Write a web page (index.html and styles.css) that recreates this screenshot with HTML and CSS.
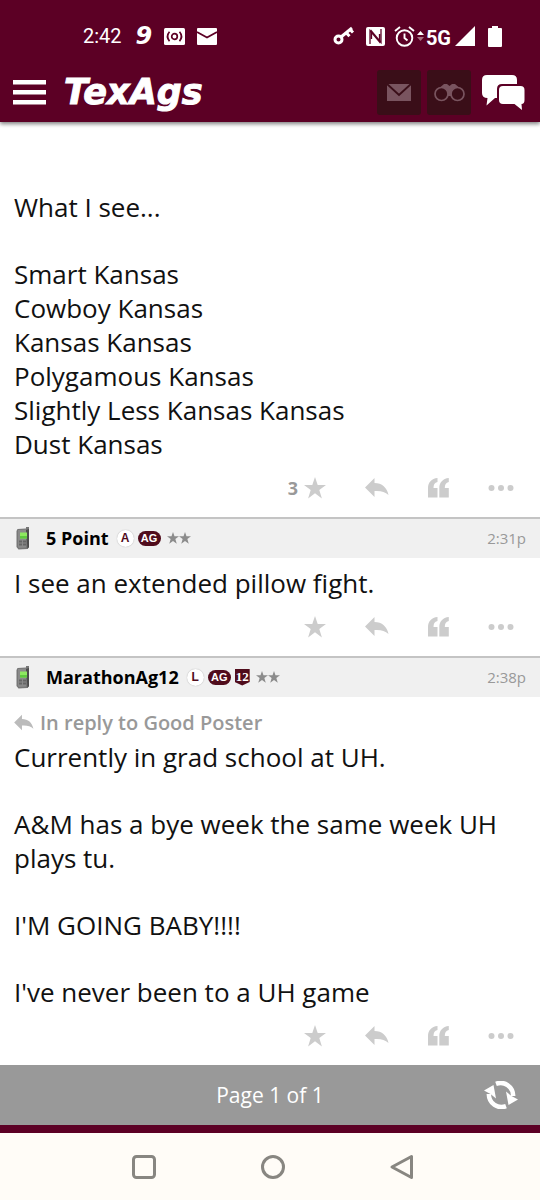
FILE: index.html
```html
<!DOCTYPE html>
<html lang="en">
<head>
<meta charset="utf-8">
<meta name="viewport" content="width=device-width, initial-scale=1">
<title>TexAgs</title>
<link rel="stylesheet" href="styles.css">
</head>
<body>
<svg class="sprite" aria-hidden="true">
  <symbol id="star" viewBox="0 0 22 22"><path d="M11 0l2.700 8H22l-6.700 5 2.600 8.400L11 16.300 4.100 21.400 6.700 13 0 8h8.300z"/></symbol>
  <symbol id="reply" viewBox="0 0 24 22"><path d="M0 10.500L9.500 1v5C17 6 22 10.500 23.500 18c-3.500-3.500-8-4.400-14-4v6z"/></symbol>
  <symbol id="quote" viewBox="0 0 22 20"><path d="M9.500 0v4C6.500 4.500 5.500 6.500 5.500 10h4v9.500H0V10C0 4.500 3.500.5 9.500 0zM20.800 0v4c-3 .5-4 2.500-4 6h4v9.500h-9.500V10c0-5.500 3.500-9.500 9.500-10z"/></symbol>
  <symbol id="dots" viewBox="0 0 26 8"><circle cx="3.500" cy="4" r="3"/><circle cx="13" cy="4" r="3"/><circle cx="22.500" cy="4" r="3"/></symbol>
  <symbol id="phone" viewBox="0 0 14 23"><path d="M1.500 2L10 1.500V0h3v20l-1.500 2-9 .5L.5 20V4z" fill="#777"/><path d="M10 3l3-1v18l-1.500 2z" fill="#4c4c4c"/><path d="M2 3l8-.5v18l-7 .5-1-1z" fill="#8a8a8a"/><path d="M4 5.500h7v6H4z" fill="#8ee860"/><path d="M4 9h7v2.500H4z" fill="#5fc840"/><path d="M3 13.500h3v2H3zm4 0h3v2H7zm-4 3h3v2H3zm4 0h3v2H7z" fill="#666"/></symbol>
</svg>

<header class="top">
  <div class="status">
    <div class="status-group">
      <span>2:42</span>
      <span class="nine">9</span>
      <svg width="21" height="17" viewBox="0 0 21 17"><rect width="21" height="17" rx="1.500" fill="#fff"/><g fill="none" stroke="#5c0025" stroke-width="1.700"><circle cx="10.500" cy="8.500" r="2.800"/><path d="M5.500 3.800q-4 4.700 0 9.400M15.500 3.800q4 4.700 0 9.400"/></g></svg>
      <svg width="20" height="17" viewBox="0 0 20 17"><rect width="20" height="17" rx="1" fill="#fff"/><path d="M0 4l10 5.500L20 4" fill="none" stroke="#5c0025" stroke-width="1.800"/></svg>
    </div>
    <div class="status-group status-right">
      <svg class="key" width="22" height="20" viewBox="0 0 22 20" fill="none" stroke="#fff"><circle cx="5.500" cy="13.500" r="3.500" stroke-width="3"/><path d="M8 11L19 2" stroke-width="3"/><path d="M13 6.500l3.500 3.800M17 3.500l3 3" stroke-width="3"/></svg>
      <svg class="nfc" width="19" height="19" viewBox="0 0 19 19"><rect width="19" height="19" rx="2" fill="#fff"/><path d="M4 17V3.500L13.500 15V7M15 2v13.500L5.500 4v8" fill="none" stroke="#5c0025" stroke-width="1.300"/></svg>
      <svg width="21" height="21" viewBox="0 0 21 21" fill="none" stroke="#fff" stroke-width="1.900"><circle cx="10.500" cy="12" r="7.800"/><path d="M10.500 7.500V12l3 2.500M1 5l5-4M20 5l-5-4"/></svg>
      <svg class="updown" width="7" height="10" viewBox="0 0 7 10"><path d="M0 4l3.500-4L7 4z" fill="#fff"/><path d="M0 6h7l-3.500 4z" fill="#a77082"/></svg>
      <span class="net">5G</span>
      <svg class="signal" width="20" height="20" viewBox="0 0 20 20"><path d="M20 0v20H0z" fill="#fff"/></svg>
      <svg width="14" height="21" viewBox="0 0 14 21"><path d="M4 0h6v2h3q1 0 1 1v17q0 1-1 1H1q-1 0-1-1V3q0-1 1-1h3z" fill="#fff"/></svg>
    </div>
  </div>
  <nav class="bar">
    <button class="menu" aria-label="Menu"><svg width="33" height="25" viewBox="0 0 33 25" fill="#fff"><path d="M0 0h33v4.500H0zM0 10h33v4.500H0zM0 20h33v4.500H0z"/></svg></button>
    <a class="logo" href="#">TexAgs</a>
    <div class="tools">
      <button class="tool" aria-label="Messages"><svg width="24" height="17" viewBox="0 0 24 17"><path d="M0 0h24v17H0z" fill="#79545f"/><path d="M0 0l12 11L24 0" fill="none" stroke="#3a0e18" stroke-width="2"/></svg></button>
      <button class="tool" aria-label="Watched"><svg width="31" height="19" viewBox="0 0 31 19"><path d="M3 7L10 1l3 0 2.500 2L18 1h3l7 6-7 6H10z" fill="#79545f"/><circle cx="7.500" cy="11" r="6.500" fill="#3a0e18" stroke="#79545f" stroke-width="1.700"/><circle cx="23.500" cy="11" r="6.500" fill="#3a0e18" stroke="#79545f" stroke-width="1.700"/></svg></button>
      <button class="chat" aria-label="Forums"><svg width="43" height="35" viewBox="0 0 43 35"><path d="M5 0h25q5 0 5 5v4H20q-5 0-5 5v9h-2l-8.500 7.500L5.500 23Q0 23 0 18V5q0-5 5-5z" fill="#fff"/><path d="M21 11h17.500q4 0 4 4v10q0 4-3 4l.5 6-7.500-6H21q-4 0-4-4V15q0-4 4-4z" fill="#fff"/></svg></button>
    </div>
  </nav>
</header>

<main>
  <article class="post">
    <div class="body first">
      <p>What I see...</p>
      <p>Smart Kansas<br>Cowboy Kansas<br>Kansas Kansas<br>Polygamous Kansas<br>Slightly Less Kansas Kansas<br>Dust Kansas</p>
    </div>
    <div class="actions">
      <button class="like" aria-label="Star, 3"><span class="count">3</span><svg width="22" height="22"><use href="#star"/></svg></button>
      <button aria-label="Reply"><svg width="24" height="22"><use href="#reply"/></svg></button>
      <button aria-label="Quote"><svg width="22" height="20"><use href="#quote"/></svg></button>
      <button aria-label="More"><svg width="26" height="8"><use href="#dots"/></svg></button>
    </div>
  </article>

  <article class="post">
    <header class="meta">
      <svg class="device" width="14" height="23"><use href="#phone"/></svg>
      <a class="user" href="#">5 Point</a>
      <span class="badges">
        <span class="round">A</span><span class="pill">AG</span>
        <span class="stars"><svg width="12" height="12"><use href="#star"/></svg><svg width="12" height="12"><use href="#star"/></svg></span>
      </span>
      <time>2:31p</time>
    </header>
    <div class="body"><p>I see an extended pillow fight.</p></div>
    <div class="actions">
      <button class="like" aria-label="Star"><svg width="22" height="22"><use href="#star"/></svg></button>
      <button aria-label="Reply"><svg width="24" height="22"><use href="#reply"/></svg></button>
      <button aria-label="Quote"><svg width="22" height="20"><use href="#quote"/></svg></button>
      <button aria-label="More"><svg width="26" height="8"><use href="#dots"/></svg></button>
    </div>
  </article>

  <article class="post">
    <header class="meta">
      <svg class="device" width="14" height="23"><use href="#phone"/></svg>
      <a class="user" href="#">MarathonAg12</a>
      <span class="badges">
        <span class="round">L</span><span class="pill">AG</span><span class="shield">12</span>
        <span class="stars"><svg width="12" height="12"><use href="#star"/></svg><svg width="12" height="12"><use href="#star"/></svg></span>
      </span>
      <time>2:38p</time>
    </header>
    <div class="body">
      <a class="in-reply" href="#"><svg width="20" height="18"><use href="#reply"/></svg>In reply to Good Poster</a>
      <p>Currently in grad school at UH.</p>
      <p>A&amp;M has a bye week the same week UH plays tu.</p>
      <p>I'M GOING BABY!!!!</p>
      <p>I've never been to a UH game</p>
    </div>
    <div class="actions">
      <button class="like" aria-label="Star"><svg width="22" height="22"><use href="#star"/></svg></button>
      <button aria-label="Reply"><svg width="24" height="22"><use href="#reply"/></svg></button>
      <button aria-label="Quote"><svg width="22" height="20"><use href="#quote"/></svg></button>
      <button aria-label="More"><svg width="26" height="8"><use href="#dots"/></svg></button>
    </div>
  </article>
</main>

<footer class="pager">
  <span class="page">Page 1 of 1</span>
  <button class="refresh" aria-label="Refresh"><svg width="34" height="28" viewBox="0 0 34 28"><g fill="none" stroke="#fff" stroke-width="4.500"><path d="M12 2.800C20-.2 29 5 29.200 15"/><path d="M22 25.200C14 28.200 5 23 4.800 13"/></g><path d="M0 9.500L9.500 4l2.500 13.500-5.500-4.500zM34 18.500L24.500 24 22 10.500l5.500 4.500z" fill="#fff"/></svg></button>
</footer>
<nav class="system">
  <button aria-label="Recent apps"><svg width="26" height="26" viewBox="0 0 26 26"><rect x="2.500" y="2.500" width="21" height="21" rx="3"/></svg></button>
  <button aria-label="Home"><svg width="26" height="26" viewBox="0 0 26 26"><circle cx="13" cy="13" r="10.500"/></svg></button>
  <button aria-label="Back"><svg width="26" height="26" viewBox="0 0 26 26"><path d="M22.500 2.500v21L3 13z" stroke-linejoin="round"/></svg></button>
</nav>
</body>
</html>
```
FILE: styles.css
```css
* { box-sizing: border-box; }

body {
  margin: 0;
  min-height: 100vh;
  display: flex;
  flex-direction: column;
  background: #fff;
  color: #111;
  font-family: "Open Sans", sans-serif;
}

main { flex: 1 0 auto; }
svg { display: block; flex: none; }
a { color: inherit; text-decoration: none; }
p { margin: 0; }

button {
  display: flex;
  align-items: center;
  justify-content: center;
  border: 0;
  padding: 0;
  background: none;
  color: inherit;
  font: inherit;
  cursor: pointer;
}

.sprite { position: absolute; width: 0; height: 0; }

/* Status bar and site header */
.top {
  background: #5c0025;
  color: #fff;
  box-shadow: 0 2px 4px rgba(0, 0, 0, 0.5);
}

.status {
  display: flex;
  justify-content: space-between;
  align-items: flex-end;
  height: 50px;
  padding: 0 38px 0 83px;
  font-family: Roboto, sans-serif;
  font-size: 20px;
}

.status-group {
  display: flex;
  align-items: center;
  gap: 12px;
  height: 28px;
}

.nine {
  margin-left: 2px;
  font: italic 900 24px/28px "DejaVu Sans", sans-serif;
}

.status-right { gap: 0; }
.key { margin-right: 11px; }
.nfc { margin-right: 9px; }
.updown { margin: 0 2px; }

.net {
  font-size: 20px;
  font-weight: 700;
  line-height: 28px;
  padding-top: 4px;
}

.signal { margin: 0 13px 0 4px; }

.bar {
  display: flex;
  align-items: center;
  height: 72px;
  padding: 12px 15px 0 13px;
}

.logo {
  margin-left: 18px;
  font: italic 700 35px/48px "DejaVu Sans", sans-serif;
  -webkit-text-stroke: 1px #fff;
}

.tools {
  display: flex;
  align-items: center;
  gap: 6px;
  margin-left: auto;
}

.tool {
  width: 44px;
  height: 45px;
  border-radius: 3px;
  background: #3a0e18;
}

.chat { margin-left: 5px; }

/* Posts */
.body {
  padding: 8px 14px 0;
  font-size: 26px;
  line-height: 34px;
}

.body.first { padding-top: 68px; }
.body p + p { margin-top: 33px; }

.meta {
  display: flex;
  align-items: center;
  height: 41px;
  padding: 0 14px 1px 16px;
  border-top: 2px solid #c4c4c4;
  background: #f0f0f0;
}

.user {
  margin-left: 16px;
  color: #000;
  font-size: 18px;
  font-weight: 700;
}

.badges {
  display: flex;
  align-items: center;
  gap: 4px;
  margin-left: 8px;
  font-family: "Liberation Sans", sans-serif;
  font-weight: 700;
}

.round {
  width: 17px;
  height: 17px;
  border-radius: 50%;
  background: #fff;
  box-shadow: 0 0 1px #999;
  color: #500c1c;
  font-size: 12px;
  line-height: 17px;
  text-align: center;
}

.pill {
  width: 23px;
  height: 15px;
  border-radius: 8px;
  background: #500c1c;
  color: #fff;
  font-size: 11px;
  line-height: 15px;
  text-align: center;
}

.shield {
  width: 15px;
  height: 17px;
  background: #500c1c;
  clip-path: polygon(0 0, 100% 0, 100% 80%, 50% 100%, 0 80%);
  color: #fff;
  font: 700 13px/15px "Liberation Serif", serif;
  text-align: center;
}

.stars {
  display: flex;
  margin-left: 2px;
  fill: #8c8c8c;
}

time {
  margin-left: auto;
  color: #999;
  font-size: 15px;
}

.in-reply {
  display: flex;
  align-items: center;
  gap: 6px;
  color: #999;
  fill: #bbb;
  font-size: 20px;
  font-weight: 600;
  line-height: 35px;
}

.actions {
  display: flex;
  justify-content: flex-end;
  height: 56px;
  padding: 0 8px 2px 0;
  color: #999;
  fill: #ccc;
}

.actions button { width: 62px; }

.actions .like {
  display: grid;
  grid-template-columns: 1fr auto 1fr;
}

.like svg { grid-column: 2; }

.count {
  padding-right: 6px;
  font-size: 18px;
  font-weight: 700;
  text-align: right;
}

/* Page footer */
.pager {
  display: grid;
  grid-template-columns: 1fr auto 1fr;
  align-items: center;
  height: 68px;
  padding: 0 22px;
  border-bottom: 8px solid #5c0025;
  background: #999;
  color: #fff;
  font-size: 21px;
}

.page { grid-column: 2; }
.refresh { justify-self: end; }

.system {
  display: flex;
  align-items: center;
  justify-content: center;
  gap: 103px;
  height: 67px;
  padding-left: 6px;
  background: #fffcf7;
  fill: none;
  stroke: #888681;
  stroke-width: 3;
}
```
